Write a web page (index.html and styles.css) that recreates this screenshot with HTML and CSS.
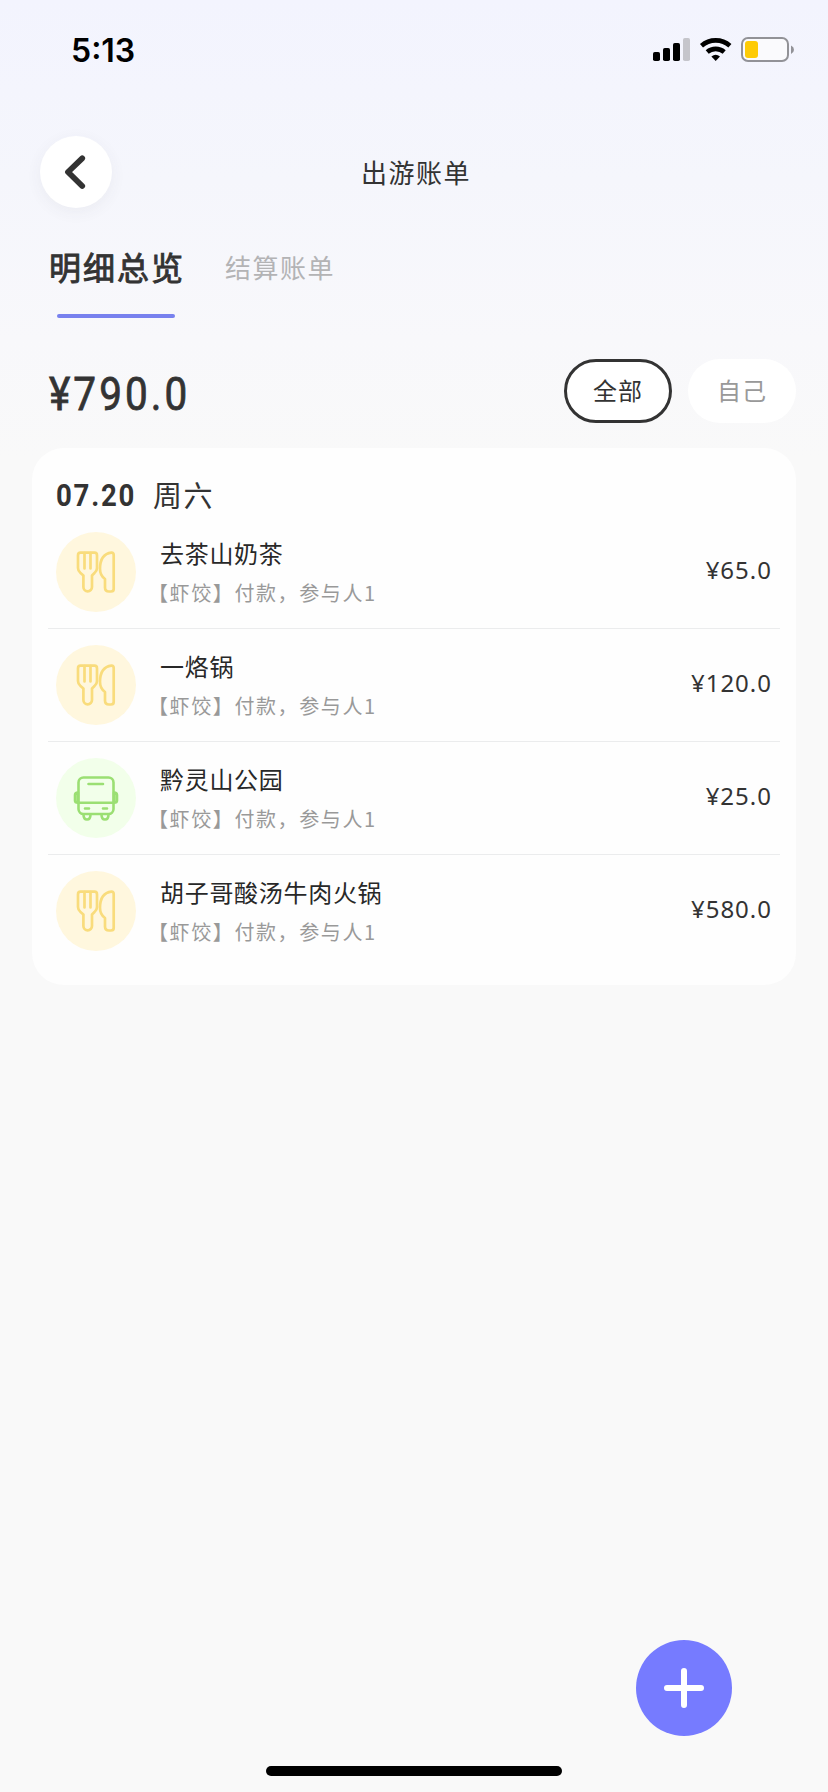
FILE: index.html
```html
<!DOCTYPE html>
<html lang="zh-CN">
<head>
<meta charset="utf-8">
<title>出游账单</title>
<link rel="stylesheet" href="styles.css">
</head>
<body>
<svg class="defs" width="0" height="0" aria-hidden="true">
  <symbol id="food" viewBox="0 0 80 80">
    <g fill="none" stroke="#f9dc7c" stroke-width="2.7" stroke-linecap="round" stroke-linejoin="round">
      <path d="M24.500 20.700H38.500Q41 20.700 41 23.500V36Q41 39 38.500 41L36 43.500V55A4.300 4.300 0 0 1 27.400 55V43.500L24.500 41Q22 39 22 36V23.500Q22 20.700 24.500 20.700Z"/>
      <path d="M28.500 21V36.500M34.500 21V36.500"/>
      <path d="M57.700 23V57Q57.700 59.500 55 59.500H53Q49 59.500 49 55.500V47Q44 43.500 44 37Q44 22 55.500 20.700Q57.700 20.600 57.700 23Z"/>
    </g>
  </symbol>
  <symbol id="bus" viewBox="0 0 80 80">
    <g fill="none" stroke="#9bdf73" stroke-width="2.600" stroke-linecap="round" stroke-linejoin="round">
      <rect x="22.500" y="19.500" width="35" height="36.500" rx="5"/>
      <path d="M22.500 44.700H57.500M32.500 26H47M29 50.500H33M47 50.500H51"/>
      <path fill="#bfeea2" d="M22 34.500Q19 34.500 19 37V42.500Q19 44.700 22 44.700ZM58 34.500Q61 34.500 61 37V42.500Q61 44.700 58 44.700Z"/>
      <path d="M27.500 56.500Q27.500 61.500 31 61.500T34.500 56.500M45.500 56.500Q45.500 61.500 49 61.500T52.500 56.500"/>
    </g>
  </symbol>
</svg>
<div class="screen">
  <div class="status">
    <span class="time">5:13</span>
    <svg class="status-icons" width="144" height="28" viewBox="0 0 144 28">
      <rect x="1" y="15" width="7" height="9" rx="1.800"/>
      <rect x="11" y="11" width="7" height="13" rx="1.800"/>
      <rect x="21" y="6" width="7" height="18" rx="1.800"/>
      <rect x="31" y="1" width="7" height="23" rx="1.800" fill="#c5c5cb"/>
      <g fill="none" stroke="#000" stroke-width="4.600">
        <path d="M49.500 8.700A21.500 21.500 0 0 1 77.900 8.700"/>
        <path d="M55.200 15A13 13 0 0 1 72.200 15"/>
      </g>
      <path d="M59.400 19.600Q63.700 16 68 19.600L63.700 24Z"/>
      <rect x="90" y="1" width="46" height="23" rx="6" fill="#fafafd" stroke="#929297" stroke-width="2"/>
      <rect x="93" y="4" width="13" height="17" rx="3" fill="#fecb05"/>
      <path d="M139 8.500Q142 10 142 12.700T139 17Z" fill="#929297"/>
    </svg>
  </div>

  <header class="nav">
    <button class="back" aria-label="返回">
      <svg width="72" height="72" viewBox="0 0 72 72"><path d="M42.200 22.300L28 36L42.200 50" fill="none" stroke="#333" stroke-width="5.800" stroke-linecap="round" stroke-linejoin="round"/></svg>
    </button>
    <h1 class="title">出游账单</h1>
  </header>

  <nav class="tabs">
    <a class="tab tab-active">明细总览</a>
    <a class="tab">结算账单</a>
  </nav>

  <section class="summary">
    <div class="total">¥790.0</div>
    <div class="filters">
      <button class="pill pill-active">全部</button>
      <button class="pill">自己</button>
    </div>
  </section>

  <main class="card">
    <div class="date"><b>07.20</b><span>周六</span></div>
    <ul class="list">
      <li class="row">
        <svg class="icon food"><use href="#food"/></svg>
        <div class="info"><div class="name">去茶山奶茶</div><div class="note">【虾饺】付款，参与人1</div></div>
        <div class="amount">¥65.0</div>
      </li>
      <li class="row">
        <svg class="icon food"><use href="#food"/></svg>
        <div class="info"><div class="name">一烙锅</div><div class="note">【虾饺】付款，参与人1</div></div>
        <div class="amount">¥120.0</div>
      </li>
      <li class="row">
        <svg class="icon bus"><use href="#bus"/></svg>
        <div class="info"><div class="name">黔灵山公园</div><div class="note">【虾饺】付款，参与人1</div></div>
        <div class="amount">¥25.0</div>
      </li>
      <li class="row">
        <svg class="icon food"><use href="#food"/></svg>
        <div class="info"><div class="name">胡子哥酸汤牛肉火锅</div><div class="note">【虾饺】付款，参与人1</div></div>
        <div class="amount">¥580.0</div>
      </li>
    </ul>
  </main>

  <footer class="bottom">
    <button class="add" aria-label="添加">
      <svg width="96" height="96" viewBox="0 0 96 96"><path d="M48 31V65M31 48H65" fill="none" stroke="#fff" stroke-width="6" stroke-linecap="round"/></svg>
    </button>
    <div class="home"></div>
  </footer>
</div>
</body>
</html>
```
FILE: styles.css
```css
* { box-sizing: border-box; margin: 0; padding: 0; }
body { font-family: "Noto Sans", "Noto Sans CJK SC", sans-serif; color: #333; }
button { border: 0; font: inherit; color: inherit; letter-spacing: inherit; }
.defs { position: absolute; }
.screen {
  width: 828px;
  height: 1792px;
  display: flex;
  flex-direction: column;
  background: linear-gradient(#f3f4fe 0, #f5f6fc 180px, #f8f8fb 340px, #f9f9f9 460px);
}
.status {
  height: 136px;
  padding: 37px 32px 0 71px;
  display: flex;
  justify-content: space-between;
  align-items: flex-start;
}
.time {
  font: 600 32px/27px Inter, sans-serif;
  color: #000;
}
.nav {
  height: 72px;
  padding: 0 40px;
  display: grid;
  grid-template-columns: 72px 1fr 72px;
  align-items: center;
}
.back {
  width: 72px;
  height: 72px;
  border-radius: 50%;
  background: #fff;
  box-shadow: 0 4px 16px rgba(60, 60, 90, 0.06);
}
.back svg, .add svg { display: block; }
.title {
  font-family: "Noto Sans CJK SC", sans-serif;
  font-size: 26px;
  font-weight: 400;
  line-height: 38px;
  letter-spacing: 1.500px;
  text-align: center;
  padding: 0 0 1px 4px;
}
.tabs {
  height: 110px;
  padding: 35px 49px 0;
  display: flex;
  align-items: flex-start;
  gap: 40px;
  font-family: "Noto Sans CJK SC", sans-serif;
}
.tab {
  font-size: 26px;
  line-height: 48px;
  letter-spacing: 1.500px;
  color: #b3b3b5;
}
.tab-active {
  display: flex;
  flex-direction: column;
  align-items: center;
  font-size: 32px;
  line-height: 46px;
  letter-spacing: 2px;
  color: #333;
  -webkit-text-stroke: 0.9px #333;
}
.tab-active::after {
  content: "";
  width: 118px;
  height: 4px;
  margin: 25px 3px 0 0;
  border-radius: 2px;
  background: #7881ee;
}
.summary {
  height: 130px;
  padding: 41px 32px 0 49px;
  display: flex;
  justify-content: space-between;
  align-items: flex-start;
}
.total {
  font: 400 46px/70px Roboto, sans-serif;
  letter-spacing: 3.500px;
  transform: scaleX(0.88);
  transform-origin: left;
  -webkit-text-stroke: 0.8px #333;
}
.filters { display: flex; gap: 16px; letter-spacing: 1px; }
.pill {
  width: 108px;
  height: 64px;
  padding-bottom: 2px;
  border-radius: 32px;
  background: #fff;
  font: 400 24px/56px "Noto Sans CJK SC", sans-serif;
  color: #999;
}
.pill-active { border: 3px solid #333; color: #333; }
.card {
  margin: 0 32px;
  height: 537px;
  padding: 27px 16px 0;
  border-radius: 32px;
  background: #fefefe;
}
.date {
  display: flex;
  align-items: center;
  height: 41px;
  padding-left: 8px;
}
.date b {
  width: 97px;
  font: 700 31px/40px Roboto, sans-serif;
  letter-spacing: 2px;
  transform: scaleX(0.89);
  transform-origin: left;
  padding-top: 1px;
}
.date span {
  font: 400 29px/38px "Noto Sans CJK SC", sans-serif;
  letter-spacing: 1.500px;
  padding-bottom: 4px;
}
.list { list-style: none; }
.row {
  height: 113px;
  padding: 0 8px;
  display: flex;
  align-items: center;
  border-bottom: 1px solid #ebeced;
}
.row:last-child { border-bottom: 0; height: 112px; }
.icon { width: 80px; height: 80px; border-radius: 50%; }
.food { background: #fff7de; }
.bus { background: #f2ffea; }
.info { flex: 1; padding: 2px 0 0 24px; }
.name {
  font: 400 24px/38px "Noto Sans CJK SC", sans-serif;
  letter-spacing: 0.700px;
  color: #282828;
}
.note {
  font: 400 20px/40px "Noto Sans CJK SC", sans-serif;
  letter-spacing: 1.600px;
  margin-left: -12px;
  padding-top: 1px;
  color: #999;
}
.amount { font-size: 24px; line-height: 34px; letter-spacing: 1px; padding-bottom: 5px; }
.bottom {
  margin-top: auto;
  height: 152px;
  display: flex;
  flex-direction: column;
  align-items: center;
  gap: 30px;
}
.add {
  align-self: flex-end;
  margin-right: 96px;
  width: 96px;
  height: 96px;
  border-radius: 50%;
  background: #767bff;
}
.home { width: 296px; height: 10px; border-radius: 5px; background: #000; }
```
